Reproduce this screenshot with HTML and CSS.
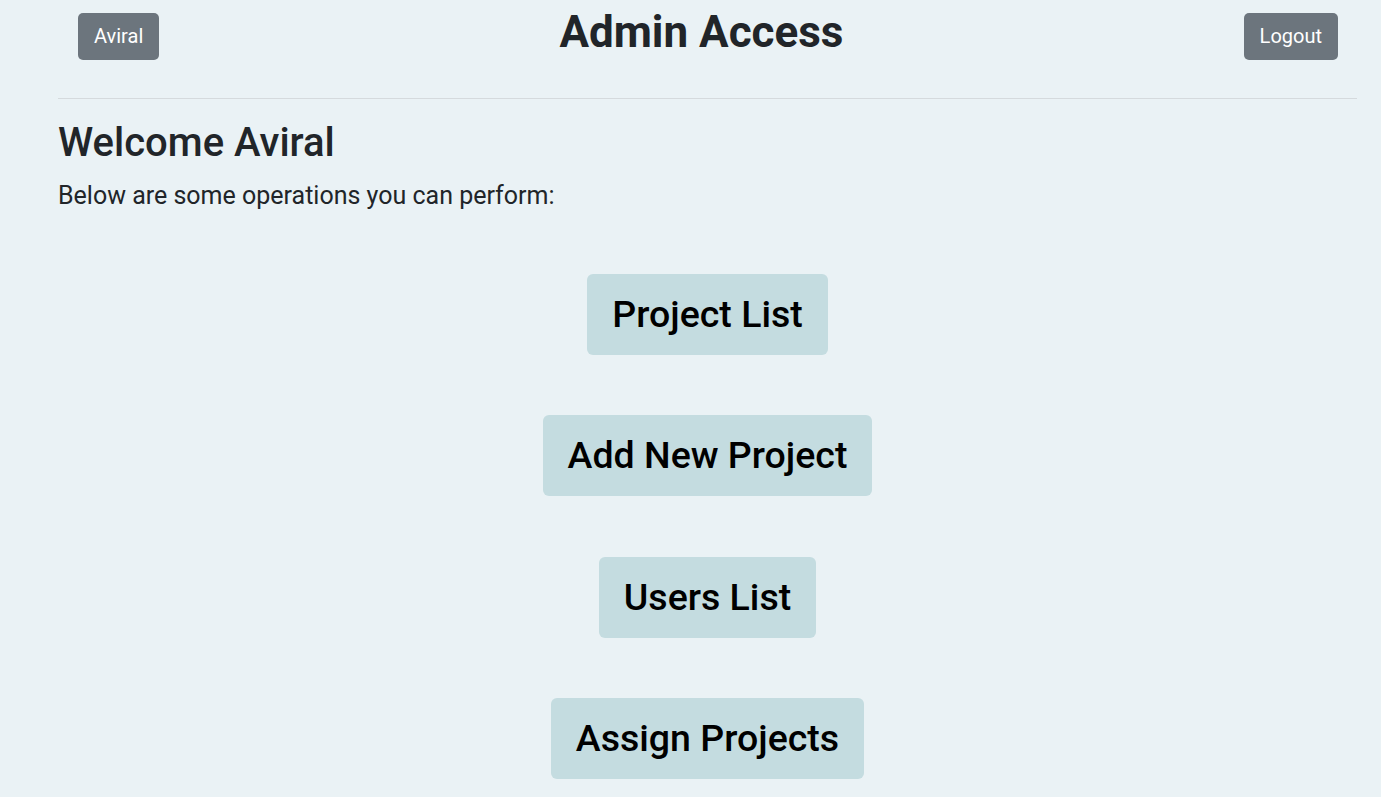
FILE: index.html
```html
<!DOCTYPE html>
<html lang="en">
<head>
<meta charset="utf-8">
<title>Admin Access</title>
<link rel="stylesheet" href="styles.css">
</head>
<body>
<div class="page">
  <header class="header">
    <button class="btn-top">Aviral</button>
    <h1 class="title">Admin Access</h1>
    <button class="btn-top">Logout</button>
  </header>
  <hr class="divider">
  <h2 class="welcome">Welcome Aviral</h2>
  <p class="lead">Below are some operations you can perform:</p>
  <div class="ops">
    <button class="op">Project List</button>
    <button class="op">Add New Project</button>
    <button class="op">Users List</button>
    <button class="op">Assign Projects</button>
  </div>
</div>
</body>
</html>
```

FILE: styles.css
```css
html, body {
  margin: 0;
  padding: 0;
}
body {
  background: #eaf2f5;
  font-family: Roboto, "Liberation Sans", sans-serif;
  color: #212529;
  overflow: hidden;
}
.page {
  padding: 0 24px 0 58px;
}
.header {
  display: flex;
  justify-content: space-between;
  align-items: flex-start;
  height: 60px;
  padding: 0 19px 0 20px;
}
.btn-top {
  margin-top: 13px;
  background: #6c757d;
  color: #fff;
  border: 0;
  border-radius: 5px;
  font-family: Roboto, "Liberation Sans", sans-serif;
  font-size: 20px;
  line-height: 31px;
  padding: 8px 16px;
}
.title {
  margin: 6px 0 0;
  font-size: 44px;
  font-weight: 700;
  line-height: 1.2;
}
.divider {
  margin: 38px 0 0;
  border: 0;
  border-top: 1px solid #d5dadd;
  height: 0;
}
.welcome {
  margin: 20px 0 0;
  font-size: 40px;
  font-weight: 500;
  line-height: 1.2;
}
.lead {
  margin: 10px 0 0;
  font-size: 25px;
  line-height: 1.5;
}
.ops {
  display: flex;
  flex-direction: column;
  align-items: center;
  gap: 60.5px;
  margin-top: 59px;
}
.op {
  background: #c4dce0;
  color: #000;
  border: 0;
  border-radius: 6px;
  font-family: Roboto, "Liberation Sans", sans-serif;
  font-size: 37.5px;
  font-weight: 500;
  line-height: 55px;
  padding: 13px 25px;
}
```
